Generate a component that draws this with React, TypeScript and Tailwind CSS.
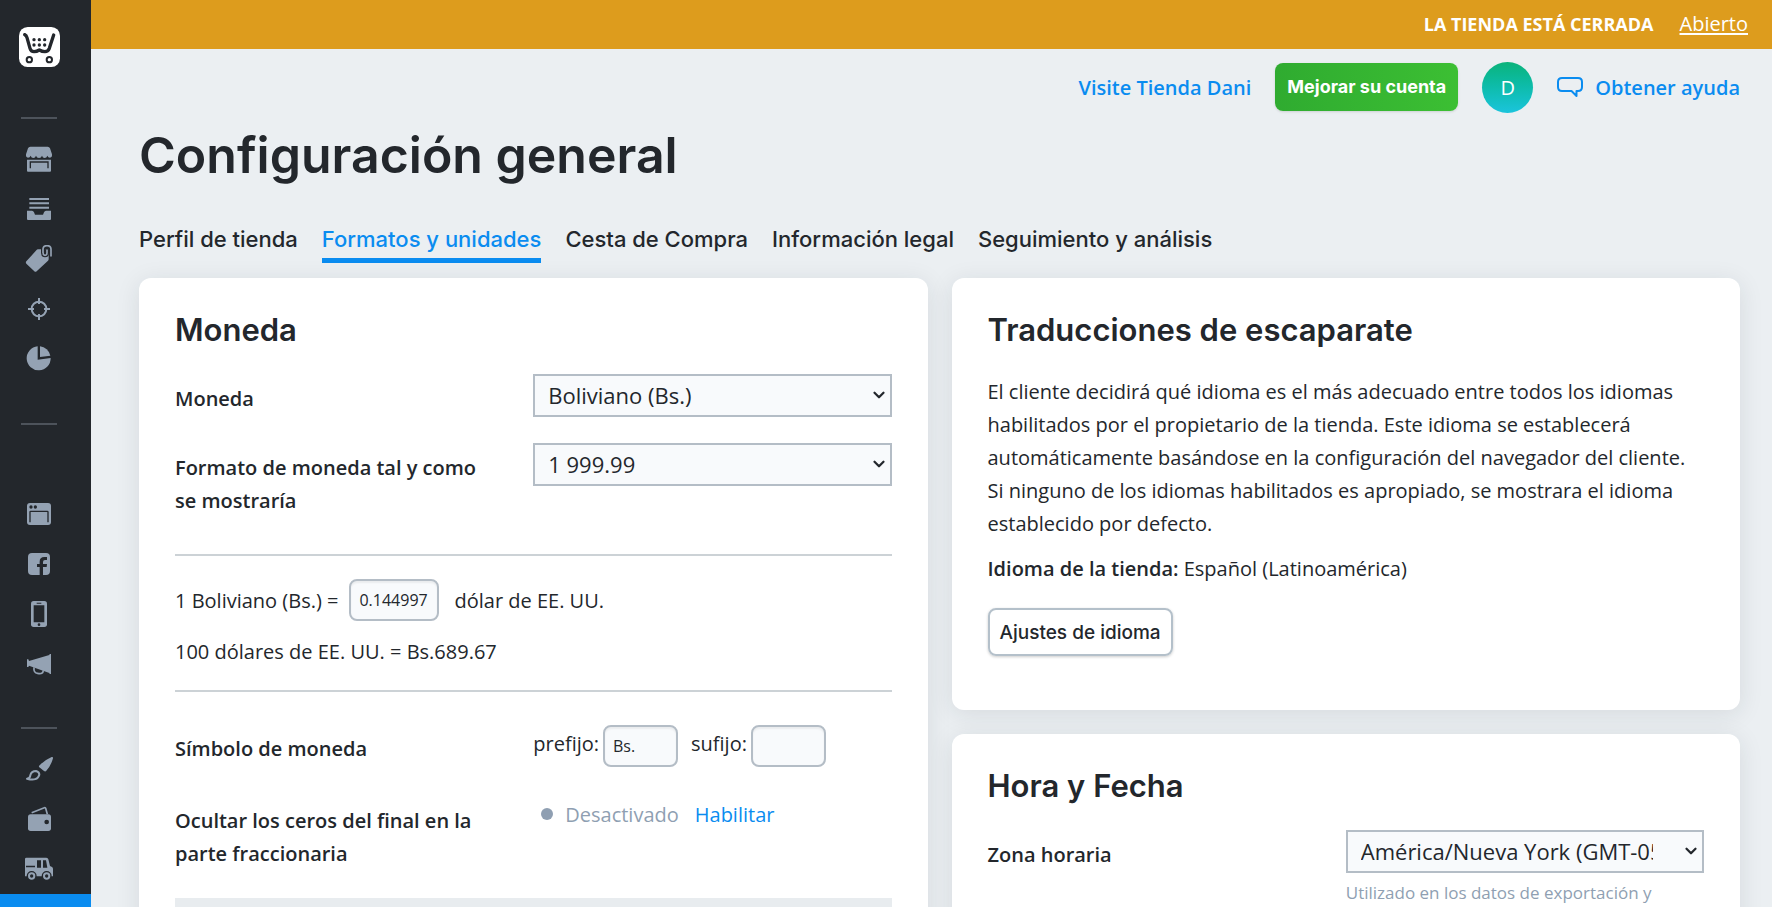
import type { ComponentProps, ReactNode } from "react";
import { ChevronDown } from "lucide-react";

const tabs = [
  "Perfil de tienda",
  "Formatos y unidades",
  "Cesta de Compra",
  "Información legal",
  "Seguimiento y análisis",
];

const DARK = "#23272c";

function Icon({ children }: { children: ReactNode }) {
  return (
    <svg viewBox="0 0 84 84" className="h-7 w-7" fill="currentColor" aria-hidden="true">
      {children}
    </svg>
  );
}

const storeIcon = (
  <Icon>
    <path d="M16 5h52q5 0 7 5l6 18q1 10-6 10-6 0-8-6-2 7-8 7t-8-7q-2 7-9 7t-9-7q-2 7-8 7t-8-7q-2 6-8 6-7 0-6-10l6-18q2-5 7-5z" />
    <path d="M6 44h72v33q0 3-3 3H9q-3 0-3-3z" />
    <path d="M16 70V51h53v19" fill="none" stroke={DARK} strokeWidth="4" />
  </Icon>
);

const ordersIcon = (
  <Icon>
    <path d="M13 9h59v6H13zM13 22h59v6H13zM13 35h59v6H13z" />
    <path d="M6 47h15q4 0 6 5l3 7h24l3-7q2-5 6-5h15v25q0 3-3 3H9q-3 0-3-3z" />
  </Icon>
);

const tagIcon = (
  <Icon>
    <path d="M39 13h28q4 0 4 4v25q0 3-2 5L35 79q-4 3-7 0L4 56q-3-4 0-7l30-33q2-3 5-3z" />
    <g fill="none" strokeLinecap="round">
      <path d="M54 24V13q0-10 12-10t12 10v20M54 22q0 9 6 9t6-7V15" stroke={DARK} strokeWidth="12" />
      <path d="M54 24V13q0-11 12-11t12 11v20M54 22q0 9 6 9t6-7V15" stroke="currentColor" strokeWidth="5" />
    </g>
  </Icon>
);

const targetIcon = (
  <Icon>
    <g fill="none" stroke="currentColor" strokeWidth="6">
      <circle cx="42" cy="42" r="22" />
      <path d="M42 9v18M42 57v18M9 42h18M57 42h18" />
    </g>
  </Icon>
);

const reportsIcon = (
  <Icon>
    <path d="M38 4v40l39-5a36 36 0 1 1-39-35z" />
    <path d="M45 4a36 36 0 0 1 31 28l-31 4z" />
  </Icon>
);

const websiteIcon = (
  <Icon>
    <rect x="6" y="9" width="72" height="66" rx="9" />
    <circle cx="18" cy="21" r="5" fill={DARK} />
    <circle cx="31" cy="21" r="5" fill={DARK} />
    <path d="M15 67V36q0-2 2-2h50q2 0 2 2v31" fill="none" stroke={DARK} strokeWidth="4" />
  </Icon>
);

const facebookIcon = (
  <Icon>
    <rect x="9" y="9" width="66" height="66" rx="12" />
    <path d="M44 75V51h-8v-9h8v-7q0-14 14-14h8v9h-6q-6 0-6 6v6h12l-1 9H54v24z" fill={DARK} />
  </Icon>
);

const mobileIcon = (
  <Icon>
    <rect x="18" y="3" width="48" height="78" rx="8" />
    <path d="M26 16h32v51H26zM35 8h14v3H35z" fill={DARK} />
    <circle cx="42" cy="74" r="4" fill={DARK} />
  </Icon>
);

const marketingIcon = (
  <Icon>
    <path d="M6 28h4l2 5 61-18 1-3h4v60h-4l-1-3-61-22-2 4H6z" />
    <path d="M27 52q-2 17 11 18 16 4 17-9" fill="none" stroke="currentColor" strokeWidth="5" />
  </Icon>
);

const designIcon = (
  <Icon>
    <path d="M80 6q5-1 4 4-6 22-20 37-3 4-7 1L43 37q-3-3 1-6Q59 15 80 6z" />
    <path
      d="M6 71q9-1 10-10 3-13 17-13 10 3 10 11-6 21-37 12z"
      fill="none"
      stroke="currentColor"
      strokeWidth="6"
      strokeLinejoin="round"
    />
  </Icon>
);

const paymentIcon = (
  <Icon>
    <rect x="9" y="28" width="69" height="50" rx="8" />
    <path d="M20 23 58 8q3-1 4 2l5 18" fill="none" stroke="currentColor" strokeWidth="5" />
    <circle cx="65" cy="51" r="7" fill={DARK} />
  </Icon>
);

const shippingIcon = (
  <Icon>
    <path d="M4 8h60q5 0 6 5l5 20 6 3q3 2 3 6v22H0V12q0-4 4-4z" />
    <path d="M36 16h12v22H36zM54 16h9l4 22H54zM3 32h27v5H3z" fill={DARK} />
    <g fill="currentColor" stroke={DARK} strokeWidth="4">
      <circle cx="20" cy="63" r="13" />
      <circle cx="65" cy="63" r="13" />
    </g>
    <circle cx="20" cy="63" r="5" fill={DARK} />
    <circle cx="65" cy="63" r="5" fill={DARK} />
  </Icon>
);

const storeMenu = [
  { label: "Mi tienda", icon: storeIcon },
  { label: "Ventas", icon: ordersIcon },
  { label: "Catálogo", icon: tagIcon },
  { label: "Promoción", icon: targetIcon },
  { label: "Informes", icon: reportsIcon },
];

const channelMenu = [
  { label: "Sitio web", icon: websiteIcon },
  { label: "Facebook", icon: facebookIcon },
  { label: "Móvil", icon: mobileIcon },
  { label: "Otros canales", icon: marketingIcon },
];

const settingsMenu = [
  { label: "Diseño", icon: designIcon },
  { label: "Pago", icon: paymentIcon },
  { label: "Envío", icon: shippingIcon },
];

function Logo() {
  return (
    <svg viewBox="0 0 123 120" className="h-10 w-[41px]" aria-hidden="true">
      <rect width="123" height="120" rx="26" fill="#fff" />
      <g fill="none" stroke={DARK} strokeLinecap="round" strokeLinejoin="round">
        <path d="M17 23q5 2 7 9l9 32q3 10 12 10 8 0 16-5 8 5 17 5 9 0 13-10l13-40" strokeWidth="10" />
        <circle cx="31" cy="98" r="8" strokeWidth="6" />
        <circle cx="91" cy="98" r="8" strokeWidth="6" />
      </g>
      <g fill={DARK}>
        <circle cx="45" cy="38" r="5" />
        <circle cx="61" cy="38" r="5" />
        <circle cx="77" cy="38" r="5" />
        <circle cx="45" cy="54" r="5" />
        <circle cx="61" cy="54" r="5" />
        <circle cx="77" cy="54" r="5" />
      </g>
    </svg>
  );
}

function MenuGroup({ items }: { items: { label: string; icon: ReactNode }[] }) {
  return (
    <ul>
      {items.map((item) => (
        <li key={item.label}>
          <a href="#" aria-label={item.label} className="flex h-[50px] items-center text-[#94a2b3]">
            {item.icon}
          </a>
        </li>
      ))}
    </ul>
  );
}

function Sidebar() {
  return (
    <nav className="flex w-[91px] shrink-0 flex-col overflow-hidden bg-[#23272c]">
      <div className="flex w-[78px] flex-col items-center pt-[27px]">
        <a href="#" aria-label="Inicio">
          <Logo />
        </a>
        <hr className="mt-[50px] mb-[15px] w-9 border-t-2 border-[#4d535b]" />
        <MenuGroup items={storeMenu} />
        <hr className="mt-[39px] mb-16 w-9 border-t-2 border-[#4d535b]" />
        <MenuGroup items={channelMenu} />
        <hr className="mt-[38px] mb-[15px] w-9 border-t-2 border-[#4d535b]" />
        <MenuGroup items={settingsMenu} />
      </div>
      <div className="grow bg-[#0a8cf0]" />
    </nav>
  );
}

function Card({ title, children }: { title: string; children: ReactNode }) {
  return (
    <section className="rounded-xl bg-white px-9 pt-8 shadow-[0_4px_24px_rgba(30,40,50,0.1)]">
      <h2 className="font-['Inter'] text-[31px] leading-10 font-semibold">{title}</h2>
      {children}
    </section>
  );
}

function Select(props: ComponentProps<"select">) {
  return (
    <div className="relative">
      <select
        {...props}
        className="h-[43px] w-full appearance-none border-2 border-[#b4bdc6] bg-[#f8fafc] pr-[49px] pl-[13px] text-[22px] text-[#23272c]"
      />
      <ChevronDown className="pointer-events-none absolute top-3 right-1 h-[18px] w-[18px]" strokeWidth={3} />
    </div>
  );
}

const inputClass =
  "h-[42px] rounded-lg border-2 border-[#b4bdc6] bg-[#f8fafc] px-2 text-base shadow-[inset_0_2px_2px_rgba(0,0,0,0.06)]";

function CurrencyCard() {
  return (
    <Card title="Moneda">
      <div className="mt-6 grid grid-cols-2">
        <label htmlFor="currency" className="pt-2 font-semibold">
          Moneda
        </label>
        <Select id="currency">
          <option>Boliviano (Bs.)</option>
        </Select>
      </div>
      <div className="mt-[26px] grid grid-cols-2">
        <label htmlFor="format" className="pt-2 pr-10 font-semibold">
          Formato de moneda tal y como se mostraría
        </label>
        <Select id="format">
          <option>1 999.99</option>
        </Select>
      </div>

      <div className="mt-[37px] border-y-2 border-[#ccd2d6] pt-[23px] pb-[22px]">
        <div className="flex items-center">
          <label htmlFor="rate">1 Boliviano (Bs.) =</label>
          <input id="rate" defaultValue="0.144997" className={`ml-[11px] w-[90px] ${inputClass}`} />
          <span className="ml-[15px]">dólar de EE. UU.</span>
        </div>
        <p className="mt-[14px]">100 dólares de EE. UU. = Bs.689.67</p>
      </div>

      <div className="mt-[33px] grid grid-cols-2">
        <p className="pt-[7px] font-semibold">Símbolo de moneda</p>
        <div className="flex">
          <label htmlFor="prefix" className="pt-[2px]">
            prefijo:
          </label>
          <input id="prefix" defaultValue="Bs." className={`ml-1 w-[75px] ${inputClass}`} />
          <label htmlFor="suffix" className="ml-[13px] pt-[2px]">
            sufijo:
          </label>
          <input id="suffix" className={`ml-1 w-[75px] ${inputClass}`} />
        </div>
      </div>

      <div className="mt-[31px] grid grid-cols-2">
        <p className="pt-[6px] pr-10 font-semibold">Ocultar los ceros del final en la parte fraccionaria</p>
        <div className="flex h-8 items-center pl-2">
          <span className="h-3 w-3 rounded-full bg-[#8f9fb2]" />
          <span className="ml-3 text-[#8f9fb2]">Desactivado</span>
          <button type="button" className="ml-4 text-[#0a8cf0]">
            Habilitar
          </button>
        </div>
      </div>
      <div className="mt-7 h-16 bg-[#e8ecef]" />
    </Card>
  );
}

function TranslationsCard() {
  return (
    <Card title="Traducciones de escaparate">
      <p className="mt-[25px]">
        El cliente decidirá qué idioma es el más adecuado entre todos los idiomas habilitados por el propietario de la
        tienda. Este idioma se establecerá automáticamente basándose en la configuración del navegador del cliente. Si
        ninguno de los idiomas habilitados es apropiado, se mostrara el idioma establecido por defecto.
      </p>
      <p className="mt-3">
        <strong className="font-semibold">Idioma de la tienda:</strong> Español (Latinoamérica)
      </p>
      <button
        type="button"
        className="mt-[23px] mb-[54px] h-12 rounded-lg border-2 border-[#b4c0ca] px-[10px] font-['Inter'] text-[19px] font-medium shadow-[0_1px_3px_rgba(0,0,0,0.2)]"
      >
        Ajustes de idioma
      </button>
    </Card>
  );
}

function DateCard() {
  return (
    <Card title="Hora y Fecha">
      <div className="mt-6 grid grid-cols-2 pb-9">
        <label htmlFor="timezone" className="pt-2 font-semibold">
          Zona horaria
        </label>
        <div>
          <Select id="timezone">
            <option>América/Nueva York (GMT-05:00)</option>
          </Select>
          <p className="mt-2 text-[17px] leading-6 text-[#8f9fb2]">Utilizado en los datos de exportación y</p>
        </div>
      </div>
    </Card>
  );
}

function Header() {
  return (
    <header className="flex h-[76px] items-center justify-end gap-6 pr-8">
      <a href="#" className="font-semibold text-[#0a8cf0]">
        Visite Tienda Dani
      </a>
      <button
        type="button"
        className="h-12 rounded-lg bg-linear-to-r from-[#2fab30] to-[#3cbf33] px-3 font-['Inter'] text-lg font-bold text-white shadow-sm"
      >
        Mejorar su cuenta
      </button>
      <button
        type="button"
        className="h-[51px] w-[51px] rounded-full bg-linear-to-b from-[#0cb37a] to-[#1bc4dc] text-white"
      >
        D
      </button>
      <a href="#" className="flex items-center gap-3 font-semibold text-[#0a8cf0]">
        <svg
          viewBox="0 0 26 20"
          className="h-5 w-[26px]"
          fill="none"
          stroke="currentColor"
          strokeWidth="2"
          strokeLinejoin="round"
          aria-hidden="true"
        >
          <path d="M5 1h16q4 0 4 4v5q0 4-4 4h-1.500v5l-5-5H5q-4 0-4-4V5q0-4 4-4z" />
        </svg>
        Obtener ayuda
      </a>
    </header>
  );
}

export default function App() {
  return (
    <div className="flex h-screen overflow-hidden bg-[#ebeff2] font-['Open_Sans',sans-serif] text-[20px] leading-[33px] text-[#23272c]">
      <Sidebar />
      <div className="flex min-w-0 grow flex-col">
        <div className="flex h-[49px] shrink-0 items-center justify-end gap-[26px] bg-[#dd9c1d] pr-6 pb-[2px] text-white">
          <strong className="text-lg font-bold">LA TIENDA ESTÁ CERRADA</strong>
          <a href="#" className="underline underline-offset-2">
            Abierto
          </a>
        </div>
        <div className="min-h-0 grow overflow-y-auto [scrollbar-width:none]">
          <Header />
          <main className="pr-8 pb-8 pl-12">
            <h1 className="font-['Inter'] text-[50px] leading-[60px] font-semibold">Configuración general</h1>
            <nav className="mt-[38px] mb-[15px] flex gap-6 font-['Inter'] text-[22px] font-medium">
              {tabs.map((tab, i) => (
                <a
                  key={tab}
                  href="#"
                  className={`border-b-[5px] pb-[2px] ${i === 1 ? "border-[#0a8cf0] text-[#0a8cf0]" : "border-transparent"}`}
                >
                  {tab}
                </a>
              ))}
            </nav>
            <div className="grid grid-cols-2 items-start gap-6">
              <CurrencyCard />
              <div className="flex flex-col gap-6">
                <TranslationsCard />
                <DateCard />
              </div>
            </div>
          </main>
        </div>
      </div>
    </div>
  );
}
